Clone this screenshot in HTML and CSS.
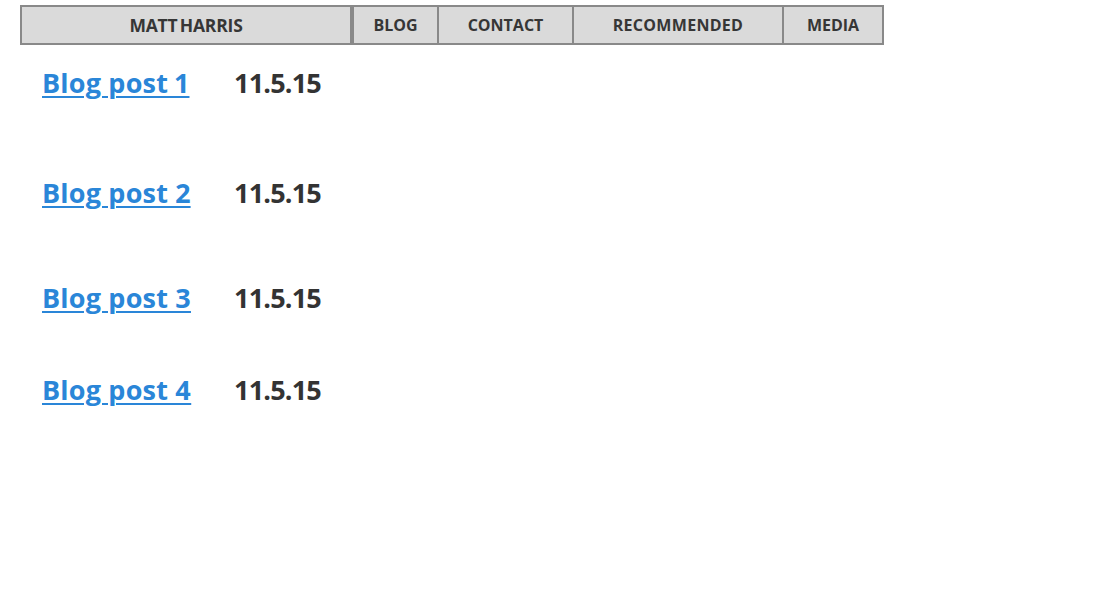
FILE: index.html
```html
<!DOCTYPE html>
<html>
<head>
<meta charset="utf-8">
<link rel="stylesheet" href="styles.css">
</head>
<body>
<nav class="nav">
  <div class="nav-item brand">MATT HARRIS</div>
  <div class="nav-item blog">BLOG</div>
  <div class="nav-item contact">CONTACT</div>
  <div class="nav-item rec">RECOMMENDED</div>
  <div class="nav-item media">MEDIA</div>
</nav>
<main class="posts">
  <div class="post r1"><a href="#" class="title">Blog post 1</a><span class="date">11.5.15</span></div>
  <div class="post r2"><a href="#" class="title">Blog post 2</a><span class="date">11.5.15</span></div>
  <div class="post r3"><a href="#" class="title">Blog post 3</a><span class="date">11.5.15</span></div>
  <div class="post r4"><a href="#" class="title">Blog post 4</a><span class="date">11.5.15</span></div>
</main>
</body>
</html>
```
FILE: styles.css
```css
body {
  margin: 0;
  background: #fff;
  font-family: "Open Sans", sans-serif;
}
.nav {
  display: flex;
  margin: 5px 0 0 20px;
  width: 864px;
  height: 40px;
  box-sizing: border-box;
  border: 2px solid #898989;
  background: #dadada;
}
.nav-item {
  display: flex;
  align-items: center;
  justify-content: center;
  padding-bottom: 1px;
  font-size: 16px;
  font-weight: 700;
  color: #363636;
  border-left: 2px solid #898989;
  box-sizing: border-box;
}
.brand {
  width: 330px;
  border-left: none;
  border-right: 2px solid #898989;
  font-size: 17.5px;
  letter-spacing: -0.2px;
  word-spacing: -2px;
}
.blog { width: 85px; }
.contact { width: 135px; }
.rec { width: 210px; letter-spacing: 0.3px; }
.media { flex: 1; }
.posts {
  padding-left: 42px;
}
.post {
  display: grid;
  grid-template-columns: 192px auto;
  align-items: baseline;
}
.title {
  color: #2a86d8;
  font-size: 27px;
  font-weight: 700;
  text-decoration: underline;
  text-decoration-thickness: 2px;
  text-underline-offset: 3px;
  letter-spacing: 0.2px;
  font-variant-numeric: proportional-nums;
}
.date {
  color: #333;
  font-size: 27px;
  font-weight: 700;
  letter-spacing: -0.8px;
}
.r1 { margin-top: 19px; }
.r2 { margin-top: 73px; }
.r3 { margin-top: 68px; }
.r4 { margin-top: 55px; }
```
